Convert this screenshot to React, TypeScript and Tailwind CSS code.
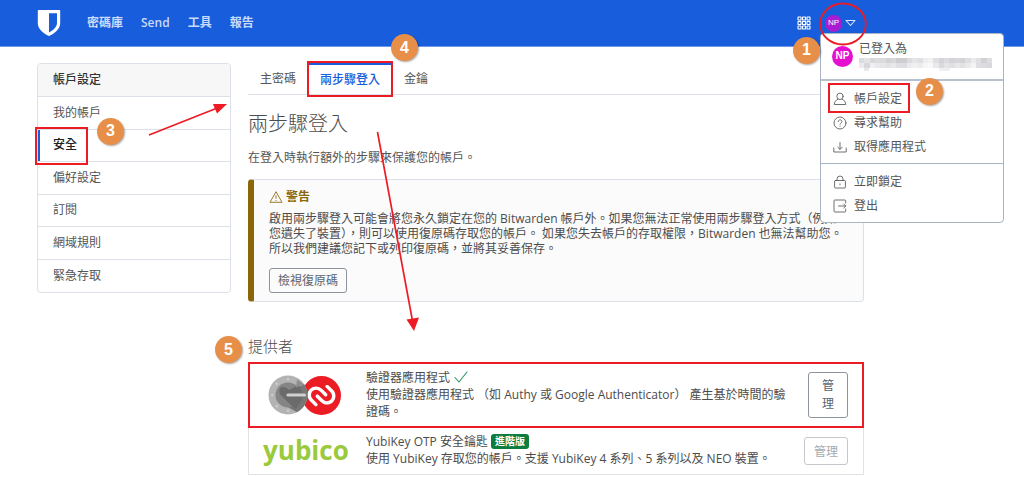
import type { ReactNode } from "react";
import { SiAuthy } from "react-icons/si";

function Step({ n, className }: { n: number; className: string }) {
  return (
    <span
      className={
        "absolute z-30 flex size-[27px] items-center justify-center rounded-full bg-[#e78f48] font-['Liberation_Sans',sans-serif] text-base font-bold text-white shadow-[1px_1px_2px_rgba(0,0,0,0.35)] " +
        className
      }
    >
      {n}
    </span>
  );
}

function Highlight({ className }: { className: string }) {
  return (
    <span
      aria-hidden="true"
      className={"pointer-events-none absolute z-20 border-2 border-[#ed1c24] " + className}
    />
  );
}

function Glyph({ children }: { children: ReactNode }) {
  return (
    <svg
      aria-hidden="true"
      viewBox="0 0 14 14"
      className="size-3.5 shrink-0"
      fill="none"
      stroke="currentColor"
      strokeWidth=".85"
      strokeLinecap="round"
      strokeLinejoin="round"
    >
      {children}
    </svg>
  );
}

function Shield() {
  return (
    <svg viewBox="0 0 24 28" className="h-7 w-6" role="img" aria-label="Bitwarden">
      <path
        fill="#fff"
        d="M1.600 1h20.800c.5 0 .8.300.8.800V14c0 6.200-5.300 10.300-11.200 13C6.100 24.300.8 20.200.8 14V1.800c0-.5.300-.8.800-.8z"
      />
      <path fill="#175ddc" d="M12 4.300h8V14c0 4-3.500 7-8 9.600z" />
    </svg>
  );
}

function AppGrid() {
  return (
    <svg viewBox="0 0 14 14" className="size-3.5" fill="none" stroke="#fff" strokeWidth="1.100" aria-hidden="true">
      {[1, 5.5, 10].map((y) =>
        [1, 5.5, 10].map((x) => <rect key={`${x}-${y}`} x={x} y={y} width="3" height="3" rx=".3" />),
      )}
    </svg>
  );
}

function Vault() {
  return (
    <svg viewBox="0 0 40 40" className="relative z-10 size-10" aria-hidden="true">
      <circle cx="20" cy="20" r="19.500" fill="#b3b3b3" />
      <path d="M20 20 29 11.500 36.500 9.800C38.500 13 39.500 16.500 39.500 20c0 7.500-4.200 13.500-10.500 17.300L18 31z" fill="#777" />
      <circle cx="20" cy="20" r="12.500" fill="#858585" />
      <path d="M13.500 12c3-.5 5.500.8 7.500 3l8.500-4.500c4 3 6 8 5 13.500L27.500 34.500 12.500 20c-1.800-3.500-1.500-6.500 1-8z" fill="#6b6b6b" />
      <path d="M29 4.500 37.500 10.500 33 9.800 28 13z" fill="#8d8d8d" />
      <path d="M20 20h16.500" stroke="#d0d0d0" strokeWidth="3.200" strokeLinecap="round" />
      <g fill="#cfcfcf">
        <circle cx="20" cy="4.200" r="1.200" />
        <circle cx="8.800" cy="8.800" r="1.200" />
        <circle cx="4.200" cy="20" r="1.200" />
        <circle cx="8.800" cy="31.200" r="1.200" />
        <circle cx="20" cy="35.800" r="1.200" />
      </g>
    </svg>
  );
}

const maskTop = ["dcdcde", "e4e4e6", "d8d8dc", "dcdce0", "dadadc", "d2d2d6", "d8d8da", "cdcdd1", "cfcfd3", "dcdcdf", "e5e5e8", "e0e0e3", "eeeef0", "f2f2f3", "e0e0e3", "d3d3d8", "dcdce0", "d4d4d8", "d8d8dc", "d3d3d6", "dedee1", "ebebed", "e0e0e3", "d2d2d6", "dedee1"];
const maskBottom = ["ececee", "d8d8dc", "f0f0f2", "e9e9eb", "e6e6e8", "e2e2e4", "e8e8ea", "e0e0e3", "dedee2", "ececee", "f0f0f2", "ececee", "f6f6f7", "f8f8f8", "e9e9eb", "dadade", "e4e4e7", "e0e0e3", "e8e8ea", "e2e2e5", "eaeaec", "f4f4f5", "dedee2", "dcdce0", "d8d8dc"];

function MaskedEmail() {
  return (
    <svg viewBox="0 0 133 14" className="h-3.5 w-[133px]" aria-hidden="true" shapeRendering="crispEdges">
      {maskTop.map((c, i) => (
        <rect key={i} x={i * 5.32} y="1" width="5.400" height="5" fill={`#${c}`} />
      ))}
      {maskBottom.map((c, i) => (
        <rect key={i} x={i * 5.32} y="6" width="5.400" height="5" fill={`#${c}`} />
      ))}
      <rect x="5" y="11" width="5" height="3" fill="#e8e8ea" />
      <rect x="80" y="11" width="11" height="3" fill="#efeff1" />
    </svg>
  );
}

function MenuItem({ icon, label, marked }: { icon: ReactNode; label: string; marked?: boolean }) {
  return (
    <li className="relative">
      <a href="#" className="flex h-6 items-center gap-[7px] pl-3">
        <Glyph>{icon}</Glyph>
        {label}
      </a>
      {marked && (
        <>
          <Highlight className="-top-1 left-[7px] h-[30px] w-[82px]" />
          <Step n={2} className="-top-[9px] left-[95px]" />
        </>
      )}
    </li>
  );
}

function AccountMenu() {
  return (
    <div className="absolute top-[21px] -left-[5px] z-10 w-[184px] rounded border border-[#a9b4c4] bg-white text-[#555]">
      <div className="flex h-[47px] items-center gap-1.5 border-b-2 border-[#b9c1cd] pl-[11px]">
        <span className="flex size-[21px] shrink-0 items-center justify-center rounded-full bg-[#e60fd0] font-['Liberation_Sans',sans-serif] text-[10px] font-bold text-white">
          NP
        </span>
        <div>
          <p className="leading-4">已登入為</p>
          <MaskedEmail />
        </div>
      </div>
      <ul className="pt-1.5 pb-1">
        <MenuItem
          marked
          label="帳戶設定"
          icon={
            <>
              <circle cx="7" cy="4.300" r="3.200" />
              <path d="M4.800 7.200C2.800 8 1.500 10 1.300 12.500h11.400C12.500 10 11.200 8 9.200 7.200" />
            </>
          }
        />
        <MenuItem
          label="尋求幫助"
          icon={
            <>
              <circle cx="7" cy="7" r="6" />
              <path d="M5.200 5.500C5.200 3.200 8.900 3.300 8.900 5.500 8.900 7 7 6.900 7 8.300M7 10.200v.1" />
            </>
          }
        />
        <MenuItem label="取得應用程式" icon={<path d="M.8 8v4h12.400V8M7 2.500v6.700M4.800 7.200 7 9.400l2.200-2.200" />} />
      </ul>
      <ul className="border-t border-[#a9b4c4] pt-1.5 pb-1">
        <MenuItem
          label="立即鎖定"
          icon={
            <>
              <rect x="1.600" y="5.500" width="10.800" height="7.500" rx=".8" />
              <path d="M4 5.500V4a3 3 0 0 1 6 0v1.500M7 8.800v1" />
            </>
          }
        />
        <MenuItem
          label="登出"
          icon={<path d="M12.700 4V1.800a.8.800 0 0 0-.8-.8H1.800a.8.800 0 0 0-.8.800v10.400c0 .4.400.8.800.8h10.100c.4 0 .8-.4.800-.8V10M5.500 7h7.200M10.800 5l2 2-2 2" />}
        />
      </ul>
    </div>
  );
}

function Header() {
  return (
    <header className="h-[47px] border-b border-[#6d98ea] bg-[#175ddc]">
      <div className="flex h-full max-w-[864px] items-center pr-2 pl-[37px]">
        <Shield />
        <nav className="ml-[26px] flex gap-[18px] font-semibold text-[#c9dafa]">
          <a href="#">密碼庫</a>
          <a href="#">Send</a>
          <a href="#">工具</a>
          <a href="#">報告</a>
        </nav>
        <button type="button" aria-label="應用程式" className="ml-auto">
          <AppGrid />
        </button>
        <div className="relative ml-3.5">
          <button type="button" className="flex h-[23px] items-center gap-[3px]">
            <span className="flex size-[17px] items-center justify-center rounded-full bg-[#a91cd0] font-['Liberation_Sans',sans-serif] text-[8px] text-white">
              NP
            </span>
            <svg viewBox="0 0 11 8" className="h-2 w-[11px]" fill="none" stroke="#dbe6fb" strokeWidth="1.100" strokeLinejoin="round" aria-hidden="true">
              <path d="M1 1.500h9L5.500 6.500z" />
            </svg>
          </button>
          <AccountMenu />
          <svg viewBox="0 0 48 44" className="pointer-events-none absolute -top-[10px] -left-[6px] z-20 h-11 w-12 max-w-none" fill="none" stroke="#ed1c24" strokeWidth="1.800" aria-hidden="true">
            <ellipse cx="24" cy="22" rx="22.800" ry="20.500" />
          </svg>
          <Step n={1} className="top-[25px] -left-8" />
        </div>
      </div>
    </header>
  );
}

const sideItems = ["我的帳戶", "安全", "偏好設定", "訂閱", "網域規則", "緊急存取"];

function Sidebar() {
  return (
    <aside className="w-[194px] shrink-0 self-start rounded border border-[#dce0e8] text-[#555]">
      <h2 className="flex h-[33px] items-center rounded-t border-b border-[#dce0e8] bg-[#f7f7f7] pl-[15px] font-medium text-[#333]">
        帳戶設定
      </h2>
      <ul className="grid min-h-[195px] auto-rows-fr divide-y divide-[#dce0e8]">
        {sideItems.map((item) => (
          <li key={item} className="relative flex">
            {item === "安全" ? (
              <>
                <a href="#" aria-current="page" className="flex flex-1 items-center border-l-2 border-[#175ddc] pl-[13px] font-medium text-[#222]">
                  {item}
                </a>
                <Highlight className="-top-[3px] -left-[3px] h-[38px] w-[53px]" />
                <Step n={3} className="-top-3 left-[59px]" />
              </>
            ) : (
              <a href="#" className="flex flex-1 items-center pl-[15px]">
                {item}
              </a>
            )}
          </li>
        ))}
      </ul>
    </aside>
  );
}

function Warning() {
  return (
    <section className="mt-[11px] rounded border border-l-[6px] border-[#dce0e8] border-l-[#8b6609] bg-[#fbfbfb] px-[15px] pt-[9px] pb-2">
      <h2 className="flex items-center gap-[3px] leading-4 font-semibold text-[#8b6609]">
        <svg viewBox="0 0 14 14" className="size-3.5" fill="none" stroke="currentColor" strokeWidth=".85" strokeLinejoin="round" aria-hidden="true">
          <path d="M7 1.700 13 12.300H1zM7 5.300v3.500M7 10v1" />
        </svg>
        警告
      </h2>
      <p className="mt-1.5 leading-[15px] whitespace-nowrap">
        啟用兩步驟登入可能會將您永久鎖定在您的 Bitwarden 帳戶外。如果您無法正常使用兩步驟登入方式（例如
        <br />
        您遺失了裝置），則可以使用復原碼存取您的帳戶。 如果您失去帳戶的存取權限，Bitwarden 也無法幫助您。
        <br />
        所以我們建議您記下或列印復原碼，並將其妥善保存。
      </p>
      <button type="button" className="mt-3 flex h-[25px] items-center rounded-[3px] border border-[#8d949e] px-2 text-[#5b6470]">
        檢視復原碼
      </button>
    </section>
  );
}

function Providers() {
  return (
    <ul className="mt-1 border border-[#e3e3e3] leading-[17px]">
      <li className="relative flex min-h-16 items-center pr-[15px]">
        <div className="flex w-[117px] shrink-0 items-center pl-[19px]">
          <Vault />
          <span className="-ml-[6px] rounded-full bg-white">
            <SiAuthy className="size-[39px] text-[#ec1c24]" />
          </span>
        </div>
        <div className="flex-1 pb-0.5 whitespace-nowrap">
          <p className="flex items-center gap-1">
            驗證器應用程式
            <svg viewBox="0 0 14 12" className="h-3 w-3.5" fill="none" stroke="#2a9562" strokeWidth="1.100" strokeLinecap="round" aria-label="已啟用">
              <path d="M1 6.500 5 11 13 1" />
            </svg>
          </p>
          <p>
            使用驗證器應用程式 （如 Authy 或 Google Authenticator） 產生基於時間的驗
            <br />
            證碼。
          </p>
        </div>
        <button type="button" className="w-10 shrink-0 rounded-[3px] border border-[#8d949e] px-3 py-1 leading-[18px] break-all text-[#5b6470]">
          管理
        </button>
        <Highlight className="-inset-x-px -inset-y-px" />
      </li>
      <li className="flex min-h-[47px] items-center border-t border-[#e3e3e3] pr-[15px]">
        <div className="w-[117px] shrink-0 pb-0.5 pl-[14px] text-[26px] leading-7 font-bold text-[#9aca3c]">yubico</div>
        <div className="flex-1 pb-0.5 whitespace-nowrap">
          <p className="flex items-center gap-[3px]">
            YubiKey OTP 安全鑰匙
            <span className="rounded-[3px] bg-[#0a7d3f] px-1 text-[10px] leading-[15px] font-bold text-white">進階版</span>
          </p>
          <p>使用 YubiKey 存取您的帳戶。支援 YubiKey 4 系列、5 系列以及 NEO 裝置。</p>
        </div>
        <button type="button" disabled className="h-7 shrink-0 rounded-[3px] border border-[#c4c8cd] px-[9px] text-[#a5aab0]">
          管理
        </button>
      </li>
    </ul>
  );
}

export default function App() {
  return (
    <div lang="zh-Hant" className="relative bg-white font-['Open_Sans','Noto_Sans_CJK_TC',sans-serif] text-xs text-[#4c4c4c]">
      <Header />
      <main className="flex max-w-[864px] gap-[17px] pt-4 pl-[37px]">
        <Sidebar />
        <div className="min-w-0 flex-1">
          <nav className="flex h-8 border-b border-[#dce0e8] text-[#555]">
            <a href="#" className="flex items-center px-3">
              主密碼
            </a>
            <a href="#" aria-current="page" className="relative flex items-center border-t-2 border-[#175ddc] px-3 font-medium text-[#175ddc]">
              兩步驟登入
              <Highlight className="-inset-x-px -top-1 -bottom-[3px]" />
              <Step n={4} className="-top-[31px] left-[83px]" />
            </a>
            <a href="#" className="flex items-center px-3">
              金鑰
            </a>
          </nav>
          <h1 className="mt-[15px] text-xl leading-7 font-light">兩步驟登入</h1>
          <p className="mt-2.5 leading-5 text-[#555]">在登入時執行額外的步驟來保護您的帳戶。</p>
          <Warning />
          <div className="relative mt-8">
            <h2 className="text-[15px] leading-6 font-light">提供者</h2>
            <Step n={5} className="top-0.5 -left-[33px]" />
          </div>
          <Providers />
        </div>
      </main>
      <svg viewBox="0 0 300 240" className="pointer-events-none absolute top-[100px] left-[140px] z-20 h-60 w-[300px]" aria-hidden="true">
        <g stroke="#ed1c24" strokeWidth="1.700" fill="#ed1c24">
          <path d="M9 35 76 8.500M237.500 32 272.500 221" />
          <path stroke="none" d="M87 4 73 4 77 13.500zM274 231 266.500 219.500 279 217.500z" />
        </g>
      </svg>
    </div>
  );
}
